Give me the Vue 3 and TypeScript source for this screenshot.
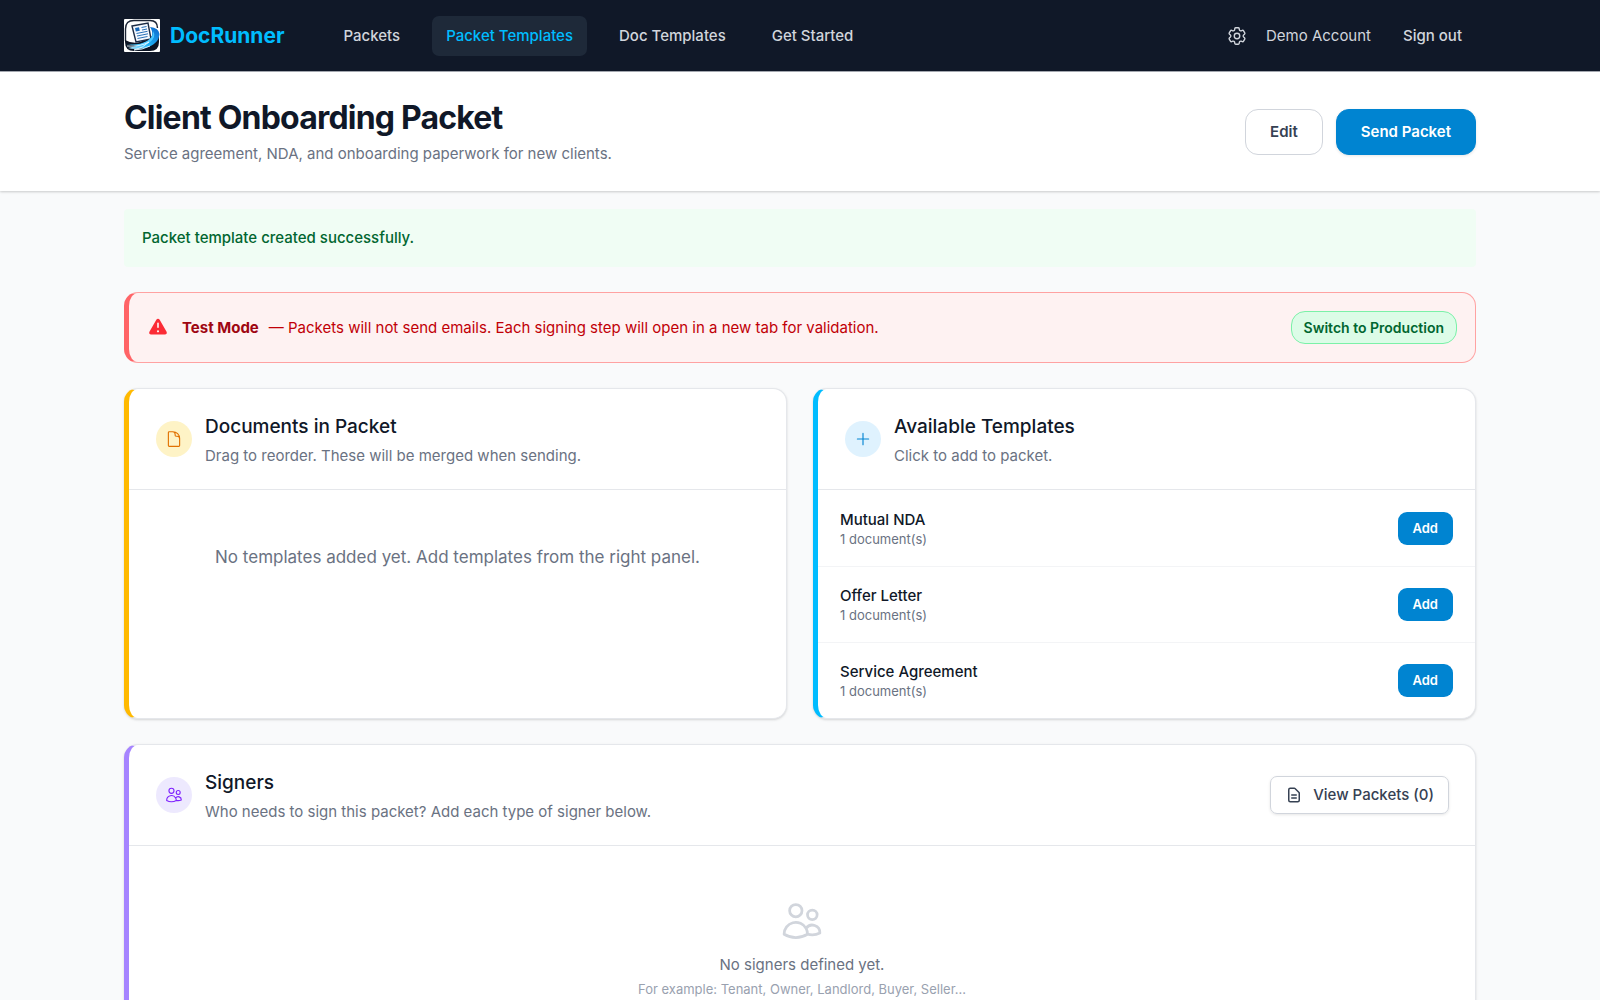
<script setup lang="ts">
interface NavLink {
  label: string
  active?: boolean
}

interface Template {
  name: string
  documents: number
}

const navLinks: NavLink[] = [
  { label: 'Packets' },
  { label: 'Packet Templates', active: true },
  { label: 'Doc Templates' },
  { label: 'Get Started' },
]

const templates: Template[] = [
  { name: 'Mutual NDA', documents: 1 },
  { name: 'Offer Letter', documents: 1 },
  { name: 'Service Agreement', documents: 1 },
]

const usersPath =
  'M15 19.128a9.38 9.38 0 0 0 2.625.372 9.337 9.337 0 0 0 4.121-.952 4.125 4.125 0 0 0-7.533-2.493M15 19.128v-.003c0-1.113-.285-2.16-.786-3.07M15 19.128v.106A12.318 12.318 0 0 1 8.624 21c-2.331 0-4.512-.645-6.374-1.766l-.001-.109a6.375 6.375 0 0 1 11.964-3.07M12 6.375a3.375 3.375 0 1 1-6.75 0 3.375 3.375 0 0 1 6.75 0Zm8.25 2.25a2.625 2.625 0 1 1-5.25 0 2.625 2.625 0 0 1 5.25 0Z'
</script>

<template>
  <div class="page">
    <header class="topbar">
      <div class="container topbar-inner">
        <a class="brand" href="#">
          <svg class="logo" viewBox="0 0 36 33" aria-hidden="true">
            <defs>
              <linearGradient id="swoosh" x1="0" y1="1" x2="1" y2="0">
                <stop offset="0" stop-color="#b9ecff" />
                <stop offset="0.4" stop-color="#20b4f8" />
                <stop offset="1" stop-color="#0a63c9" />
              </linearGradient>
            </defs>
            <rect width="36" height="33" rx="1" fill="#fff" />
            <path d="M1.500 22V10Q1.500 1.500 10 1.500H26Q33.500 1.500 33.500 9" fill="none" stroke="#1c2536" stroke-width="1.400" />
            <path d="M1 21Q8 25 16 23L35 14V23Q35 32 26 32H10Q1 32 1 23Z" fill="#0c1424" />
            <path d="M8 7L24 4L27 20L12 23Z" fill="#f5f9ff" stroke="#1c2b45" stroke-width="1.400" />
            <path d="M11 9l4-.8.8 3.600-4 .8z" fill="#1767b8" />
            <path d="M17.500 8.500l5-1M18 11l5-1M12.500 14.500l11-2.200M13 17l11-2.200M13.500 19.500l10-2" stroke="#2a71b8" stroke-width="1" />
            <path d="M26 8Q35 9 35.500 15Q35 25 21 29Q11 31 4 29Q14 27 22 23Q32 17 26 8Z" fill="url(#swoosh)" />
            <path d="M2 25Q14 27 23 22Q30 18 29 12Q33 18 25 24Q16 29 2 25Z" fill="#49c8ff" />
            <path d="M3 27Q16 28 25 23Q19 29 10 31Q18 31 26 27" fill="none" stroke="#e6f8ff" stroke-width="0.900" />
          </svg>
          <span class="brand-name">DocRunner</span>
        </a>
        <nav class="nav" aria-label="Main">
          <a v-for="link in navLinks" :key="link.label" class="nav-link" :class="{ active: link.active }" href="#">{{ link.label }}</a>
        </nav>
        <div class="account">
          <a class="settings" href="#" aria-label="Settings">
            <svg class="icon-gear" viewBox="0 0 24 24" fill="none" stroke="currentColor" stroke-width="1.500" stroke-linecap="round" stroke-linejoin="round">
              <path d="M9.594 3.940c.09-.542.56-.94 1.110-.94h2.593c.55 0 1.020.398 1.110.94l.213 1.281c.063.374.313.686.645.87.074.04.147.083.22.127.325.196.72.257 1.075.124l1.217-.456a1.125 1.125 0 0 1 1.370.49l1.296 2.247a1.125 1.125 0 0 1-.26 1.431l-1.003.827c-.293.241-.438.613-.43.992a7.723 7.723 0 0 1 0 .255c-.008.378.137.75.43.991l1.004.827c.424.35.534.955.26 1.430l-1.298 2.247a1.125 1.125 0 0 1-1.369.491l-1.217-.456c-.355-.133-.75-.072-1.076.124a6.470 6.470 0 0 1-.22.128c-.331.183-.581.495-.644.869l-.213 1.281c-.09.543-.56.94-1.110.94h-2.594c-.55 0-1.019-.398-1.110-.94l-.213-1.281c-.062-.374-.312-.686-.644-.87a6.520 6.520 0 0 1-.22-.127c-.325-.196-.72-.257-1.076-.124l-1.217.456a1.125 1.125 0 0 1-1.369-.49l-1.297-2.247a1.125 1.125 0 0 1 .26-1.431l1.004-.827c.292-.24.437-.613.43-.991a6.932 6.932 0 0 1 0-.255c.007-.38-.138-.751-.43-.992l-1.004-.827a1.125 1.125 0 0 1-.26-1.430l1.297-2.247a1.125 1.125 0 0 1 1.370-.491l1.216.456c.356.133.751.072 1.076-.124.072-.044.146-.086.22-.128.332-.183.582-.495.644-.869l.214-1.280Z" />
              <path d="M15 12a3 3 0 1 1-6 0 3 3 0 0 1 6 0Z" />
            </svg>
          </a>
          <span class="account-name">Demo Account</span>
          <button class="sign-out" type="button">Sign out</button>
        </div>
      </div>
    </header>

    <section class="page-head">
      <div class="container page-head-inner">
        <div>
          <h1 class="page-title">Client Onboarding Packet</h1>
          <p class="page-sub">Service agreement, NDA, and onboarding paperwork for new clients.</p>
        </div>
        <div class="actions">
          <button class="btn btn-outline" type="button">Edit</button>
          <button class="btn btn-primary" type="button">Send Packet</button>
        </div>
      </div>
    </section>

    <main class="container content">
      <div class="notice" role="status">Packet template created successfully.</div>

      <div class="alert" role="alert">
        <svg class="icon-warning" viewBox="0 0 20 20" fill="currentColor" aria-hidden="true">
          <path fill-rule="evenodd" d="M8.485 2.495c.673-1.167 2.357-1.167 3.030 0l6.280 10.875c.673 1.167-.17 2.625-1.516 2.625H3.720c-1.347 0-2.189-1.458-1.515-2.625L8.485 2.495ZM10 5a.75.75 0 0 1 .75.75v3.500a.75.75 0 0 1-1.500 0v-3.500A.75.75 0 0 1 10 5Zm0 9a1 1 0 1 0 0-2 1 1 0 0 0 0 2Z" clip-rule="evenodd" />
        </svg>
        <p class="alert-text"><strong>Test Mode</strong><span>— Packets will not send emails. Each signing step will open in a new tab for validation.</span></p>
        <button class="btn-switch" type="button">Switch to Production</button>
      </div>

      <div class="columns">
        <section class="card card-amber">
          <header class="card-head">
            <span class="badge badge-amber">
              <svg class="icon" viewBox="0 0 24 24" fill="none" stroke="currentColor" stroke-width="1.500" stroke-linecap="round" stroke-linejoin="round" aria-hidden="true">
                <path d="M19.500 14.250v-2.625a3.375 3.375 0 0 0-3.375-3.375h-1.500A1.125 1.125 0 0 1 13.500 7.125v-1.500a3.375 3.375 0 0 0-3.375-3.375H8.250m2.250 0H5.625c-.621 0-1.125.504-1.125 1.125v17.250c0 .621.504 1.125 1.125 1.125h12.750c.621 0 1.125-.504 1.125-1.125V11.250a9 9 0 0 0-9-9Z" />
              </svg>
            </span>
            <div>
              <h2 class="card-title">Documents in Packet</h2>
              <p class="card-sub">Drag to reorder. These will be merged when sending.</p>
            </div>
          </header>
          <p class="empty-docs">No templates added yet. Add templates from the right panel.</p>
        </section>

        <section class="card card-sky">
          <header class="card-head">
            <span class="badge badge-sky">
              <svg class="icon" viewBox="0 0 24 24" fill="none" stroke="currentColor" stroke-width="1.500" stroke-linecap="round" aria-hidden="true">
                <path d="M12 4.500v15m7.500-7.500h-15" />
              </svg>
            </span>
            <div>
              <h2 class="card-title">Available Templates</h2>
              <p class="card-sub">Click to add to packet.</p>
            </div>
          </header>
          <ul class="templates">
            <li v-for="item in templates" :key="item.name" class="template">
              <div>
                <p class="template-name">{{ item.name }}</p>
                <p class="template-meta">{{ item.documents }} document(s)</p>
              </div>
              <button class="btn-add" type="button" :aria-label="`Add ${item.name}`">Add</button>
            </li>
          </ul>
        </section>
      </div>

      <section class="card card-violet">
        <header class="card-head">
          <span class="badge badge-violet">
            <svg class="icon" viewBox="0 0 24 24" fill="none" stroke="currentColor" stroke-width="1.500" stroke-linecap="round" stroke-linejoin="round" aria-hidden="true">
              <path :d="usersPath" />
            </svg>
          </span>
          <div>
            <h2 class="card-title">Signers</h2>
            <p class="card-sub">Who needs to sign this packet? Add each type of signer below.</p>
          </div>
          <a class="btn-view" href="#">
            <svg class="icon" viewBox="0 0 24 24" fill="none" stroke="currentColor" stroke-width="2" stroke-linecap="round" stroke-linejoin="round" aria-hidden="true">
              <path d="M9 12h6m-6 4h6m2 5H7a2 2 0 0 1-2-2V5a2 2 0 0 1 2-2h5.586a1 1 0 0 1 .707.293l5.414 5.414a1 1 0 0 1 .293.707V19a2 2 0 0 1-2 2z" />
            </svg>
            View Packets (0)
          </a>
        </header>
        <div class="empty-signers">
          <svg class="icon-users" viewBox="0 0 24 24" fill="none" stroke="currentColor" stroke-width="1.500" stroke-linecap="round" stroke-linejoin="round" aria-hidden="true">
            <path :d="usersPath" />
          </svg>
          <p class="empty-title">No signers defined yet.</p>
          <p class="empty-hint">For example: Tenant, Owner, Landlord, Buyer, Seller...</p>
        </div>
      </section>
    </main>
  </div>
</template>

<style>
body {
  margin: 0;
  background: #f9fafb;
}
</style>

<style scoped>
.page {
  min-height: 100vh;
  background: #f9fafb;
  color: #101828;
  font-family: Inter, "Liberation Sans", sans-serif;
  font-size: 15px;
  line-height: 22px;
}
h1, h2, p, ul {
  margin: 0;
  padding: 0;
}
a {
  color: inherit;
  text-decoration: none;
}
button {
  font: inherit;
  cursor: pointer;
}
svg {
  display: block;
  flex: none;
}
.container {
  box-sizing: border-box;
  max-width: 1424px;
  margin: 0 auto;
  padding: 0 36px;
}
.topbar {
  background: #101828;
  border-bottom: 1px solid #a7abb3;
}
.topbar-inner {
  display: flex;
  align-items: center;
  height: 71px;
}
.brand {
  display: flex;
  align-items: center;
  gap: 10px;
}
.logo {
  width: 36px;
  height: 33px;
}
.brand-name {
  color: #00bcff;
  font-size: 21px;
  line-height: 32px;
  font-weight: 700;
}
.nav {
  display: flex;
  gap: 18px;
  margin-left: 45px;
}
.nav-link,
.sign-out {
  padding: 9px 14px;
  border: 0;
  border-radius: 7px;
  background: none;
  color: #d1d5dc;
  font-weight: 500;
}
.nav-link.active {
  background: #1e2939;
  color: #00bcff;
}
.account {
  display: flex;
  align-items: center;
  gap: 18px;
  margin-left: auto;
  color: #d1d5dc;
}
.icon-gear {
  width: 22px;
  height: 22px;
}
.page-head {
  background: #fff;
  box-shadow: 0 1px 3px rgba(0, 0, 0, 0.1), 0 1px 2px rgba(0, 0, 0, 0.1);
}
.page-head-inner {
  display: flex;
  align-items: center;
  justify-content: space-between;
  height: 119px;
}
.page-title {
  font-size: 32px;
  line-height: 38px;
  font-weight: 700;
  letter-spacing: -0.025em;
}
.page-sub {
  margin-top: 6px;
  color: #6a7282;
}
.actions {
  display: flex;
  gap: 13px;
}
.btn {
  padding: 11px 24px;
  border: 1px solid #d1d5dc;
  border-radius: 13px;
  font-weight: 600;
}
.btn-outline {
  background: #fff;
  color: #364153;
}
.btn-primary {
  border-color: #0084d1;
  background: #0084d1;
  color: #fff;
  box-shadow: 0 1px 3px rgba(0, 0, 0, 0.1);
}
.content {
  display: flex;
  flex-direction: column;
  gap: 25px;
  padding-top: 18px;
  padding-bottom: 36px;
}
.notice {
  padding: 18px;
  border-radius: 4px;
  background: #f0fdf4;
  color: #016630;
  font-weight: 500;
}
.alert {
  display: flex;
  align-items: center;
  box-sizing: border-box;
  min-height: 71px;
  padding: 0 18px;
  border: 1px solid #ffa2a2;
  border-left: 5px solid #ff6467;
  border-radius: 14px;
  background: #fef2f2;
}
.icon-warning {
  width: 22px;
  height: 22px;
  margin-right: 13px;
  color: #fb2c36;
}
.alert-text {
  display: flex;
  gap: 10px;
  color: #c10007;
}
.alert-text strong {
  color: #9f0712;
  font-weight: 700;
}
.btn-switch {
  margin-left: auto;
  padding: 6px 12px;
  border: 1px solid #7bf1a8;
  border-radius: 14px;
  background: #dcfce7;
  color: #016630;
  font-size: 14px;
  line-height: 19px;
  font-weight: 600;
}
.columns {
  display: grid;
  grid-template-columns: repeat(2, minmax(0, 1fr));
  gap: 26px;
}
.card {
  border: 1px solid #e5e7eb;
  border-left-width: 5px;
  border-radius: 14px;
  background: #fff;
  box-shadow: 0 1px 3px rgba(0, 0, 0, 0.1), 0 1px 2px rgba(0, 0, 0, 0.06);
}
.card-amber {
  border-left-color: #ffb900;
}
.card-sky {
  border-left-color: #00bcff;
}
.card-violet {
  border-left-color: #a684ff;
}
.card-head {
  display: flex;
  align-items: center;
  gap: 13px;
  box-sizing: border-box;
  min-height: 101px;
  padding: 0 26px 0 27px;
  border-bottom: 1px solid #e5e7eb;
}
.badge {
  display: grid;
  place-items: center;
  width: 36px;
  height: 36px;
  border-radius: 50%;
}
.badge-amber {
  background: #fef3c6;
  color: #e17100;
}
.badge-sky {
  background: #dff2fe;
  color: #0084d1;
}
.badge-violet {
  background: #ede9fe;
  color: #7f22fe;
}
.icon {
  width: 18px;
  height: 18px;
}
.card-title {
  font-size: 19px;
  line-height: 32px;
  font-weight: 500;
}
.card-sub {
  margin-top: 2px;
  color: #6a7282;
}
.empty-docs {
  padding: 54px 26px;
  color: #6a7282;
  font-size: 17px;
  line-height: 26px;
  text-align: center;
}
.templates {
  list-style: none;
}
.template {
  display: flex;
  align-items: center;
  justify-content: space-between;
  padding: 18px 22px;
  border-top: 1px solid #f3f4f6;
}
.template:first-child {
  border-top-color: transparent;
}
.template-name {
  font-weight: 500;
}
.template-meta {
  color: #6a7282;
  font-size: 13px;
  line-height: 17px;
}
.btn-add {
  padding: 7px 15px;
  border: 0;
  border-radius: 9px;
  background: #0084d1;
  color: #fff;
  font-size: 13px;
  line-height: 19px;
  font-weight: 600;
}
.btn-view {
  display: flex;
  align-items: center;
  gap: 10px;
  margin-left: auto;
  padding: 7px 14px;
  border: 1px solid #d1d5dc;
  border-radius: 7px;
  color: #364153;
  font-weight: 500;
  box-shadow: 0 1px 3px rgba(0, 0, 0, 0.1);
}
.empty-signers {
  display: flex;
  flex-direction: column;
  align-items: center;
  padding: 53px 26px;
  color: #6a7282;
}
.icon-users {
  width: 44px;
  height: 44px;
  margin-bottom: 11px;
  color: #d1d5dc;
}
.empty-hint {
  margin-top: 4px;
  color: #99a1af;
  font-size: 13px;
  line-height: 18px;
}
</style>
